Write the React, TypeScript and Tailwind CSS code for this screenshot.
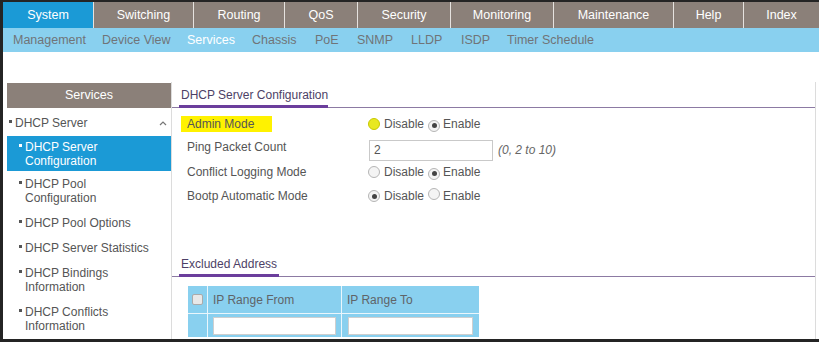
import React from 'react';

const tabs = [
  { label: 'System', w: 90, active: true },
  { label: 'Switching', w: 100 },
  { label: 'Routing', w: 91 },
  { label: 'QoS', w: 73 },
  { label: 'Security', w: 93 },
  { label: 'Monitoring', w: 103 },
  { label: 'Maintenance', w: 120 },
  { label: 'Help', w: 70 },
  { label: 'Index', w: 76 },
];

const subTabs = [
  { label: 'Management', x: 10 },
  { label: 'Device View', x: 99 },
  { label: 'Services', x: 184, active: true },
  { label: 'Chassis', x: 249 },
  { label: 'PoE', x: 312 },
  { label: 'SNMP', x: 354 },
  { label: 'LLDP', x: 408 },
  { label: 'ISDP', x: 458 },
  { label: 'Timer Schedule', x: 504 },
];

const menu = [
  { lines: ['DHCP Server', 'Configuration'], active: true },
  { lines: ['DHCP Pool', 'Configuration'] },
  { lines: ['DHCP Pool Options'] },
  { lines: ['DHCP Server Statistics'] },
  { lines: ['DHCP Bindings', 'Information'] },
  { lines: ['DHCP Conflicts', 'Information'] },
];

const Bullet = () => <span className="inline-block w-[3px] h-[3px] bg-current align-middle mr-[3px] -mt-[4px]" />;

const Radio = ({ checked, highlight }: { checked?: boolean; highlight?: boolean }) => (
  <span
    className={`inline-flex items-center justify-center w-[12px] h-[12px] rounded-full border ${
      highlight ? 'border-[#c8c800] bg-[#e8e820]' : 'border-[#b5b5b5] bg-[#f4f4f4]'
    }`}
  >
    {checked && <span className="w-[5px] h-[5px] rounded-full bg-[#444]" />}
  </span>
);

const RadioPair = ({ enabled, highlight }: { enabled: boolean; highlight?: boolean }) => (
  <div className="flex items-center text-[#555]">
    <Radio checked={!enabled} highlight={highlight} />
    <span className="ml-[4px]">Disable</span>
    <span className="ml-[4px]">
      <Radio checked={enabled} />
    </span>
    <span className="ml-[3px]">Enable</span>
  </div>
);

const SectionTitle = ({ text, barW }: { text: string; barW: number }) => (
  <div className="relative">
    <div className="pl-[9px] h-[18px] leading-[18px] text-[#4d3f66]">{text}</div>
    <div className="h-[1px] bg-[#8c7aa3] mt-[3px]" />
    <div className="absolute left-[7px] bottom-0 h-[3px] bg-[#6b3e9c]" style={{ width: barW }} />
  </div>
);

export default function App() {
  return (
    <div className="w-[819px] h-[343px] bg-white overflow-hidden" style={{ fontFamily: '"Liberation Sans", Arial, sans-serif' }}>
      <div className="h-[342px] border-t-2 border-l-[3px] border-b-[3px] border-[#242424] flex flex-col overflow-hidden text-[12px]">
        {/* main tabs */}
        <div className="flex h-[26px] bg-[#8b8079] shrink-0">
          {tabs.map((t, i) => (
            <div
              key={t.label}
              className={`flex items-center justify-center text-white text-[12.5px] ${
                t.active ? 'bg-[#1b9ad6]' : ''
              } ${i > 0 ? 'border-l border-[#e6e2df]' : ''}`}
              style={{ width: t.w }}
            >
              {t.label}
            </div>
          ))}
        </div>
        {/* sub tabs */}
        <div className="relative h-[24px] bg-[#89d0ef] shrink-0 text-[12.5px]">
          {subTabs.map((s) => (
            <span
              key={s.label}
              className={`absolute top-0 leading-[24px] ${s.active ? 'text-white' : 'text-[#707478]'}`}
              style={{ left: s.x }}
            >
              {s.label}
            </span>
          ))}
        </div>
        {/* body */}
        <div className="flex flex-1 pt-[30px] min-h-0">
          <div className="w-[168px] pl-[4px] pt-[1px] shrink-0">
            <div className="h-[25px] bg-[#8b8079] text-white flex items-center justify-center text-[12.5px]">Services</div>
            <div className="flex items-center justify-between h-[28px] pl-[2px] pr-[4px] pt-[2px] text-[#555]">
              <span>
                <Bullet />DHCP Server
              </span>
              <svg width="8" height="6" viewBox="0 0 8 6">
                <path d="M1 5 L4 2 L7 5" stroke="#777" strokeWidth="1.2" fill="none" />
              </svg>
            </div>
            {menu.map((m, i) => (
              <div
                key={i}
                className={`pl-[12px] leading-[14px] ${
                  m.active ? 'bg-[#1b9ad6] text-white py-[4px] h-[35px]' : 'text-[#555] py-[6px]'
                } ${!m.active && m.lines.length === 1 ? 'h-[25px]' : ''} ${
                  !m.active && m.lines.length === 2 ? 'h-[39px]' : ''
                }`}
              >
                {m.lines.map((l, j) => (
                  <div key={j}>
                    {j === 0 && <Bullet />}
                    {j > 0 && <span className="inline-block w-[6px]" />}
                    {l}
                  </div>
                ))}
              </div>
            ))}
          </div>
          <div className="flex-1 border-l border-r border-[#dcdcdc] pt-[4px] min-w-0">
            <SectionTitle text="DHCP Server Configuration" barW={149} />
            <div className="pt-[4px] pl-[9px] text-[#555]">
              <div className="flex items-center h-[24px]">
                <div className="w-[187px]">
                  <span className="bg-[#fff200] pl-[6px] pr-[18px] py-[1px]">Admin Mode</span>
                </div>
                <RadioPair enabled highlight />
              </div>
              <div className="flex items-center h-[24px]">
                <div className="w-[188px] pl-[6px] -mt-[2px]">Ping Packet Count</div>
                <div className="w-[124px] h-[21px] border border-[#c9c9c9] pl-[4px] flex items-center mt-[4px]">2</div>
                <span className="ml-[5px] italic text-[#666] mt-[4px]">(0, 2 to 10)</span>
              </div>
              <div className="flex items-center h-[24px]">
                <div className="w-[187px] pl-[6px]">Conflict Logging Mode</div>
                <RadioPair enabled />
              </div>
              <div className="flex items-center h-[24px]">
                <div className="w-[187px] pl-[6px]">Bootp Automatic Mode</div>
                <RadioPair enabled={false} />
              </div>
            </div>
            <div className="mt-[47px]">
              <SectionTitle text="Excluded Address" barW={100} />
            </div>
            <div className="ml-[16px] mt-[9px] w-[291px] bg-[#89d0ef] text-[#5f6468]">
              <div className="flex h-[27px]">
                <div className="w-[20px] flex items-center justify-center border-r border-[#eaf6fc]">
                  <span className="w-[11px] h-[11px] border border-[#aaa] bg-[#e8e8e8] rounded-[2px]" />
                </div>
                <div className="w-[134px] flex items-center pl-[5px] border-r border-[#eaf6fc]">IP Range From</div>
                <div className="flex-1 flex items-center pl-[5px]">IP Range To</div>
              </div>
              <div className="flex h-[24px] border-t border-[#eaf6fc]">
                <div className="w-[20px] border-r border-[#eaf6fc]" />
                <div className="w-[134px] flex items-center px-[5px] border-r border-[#eaf6fc]">
                  <div className="w-full h-[18px] bg-white border border-[#cfcfcf]" />
                </div>
                <div className="flex-1 flex items-center px-[6px]">
                  <div className="w-full h-[18px] bg-white border border-[#cfcfcf]" />
                </div>
              </div>
            </div>
          </div>
          <div className="w-[3px] shrink-0" />
        </div>
      </div>
    </div>
  );
}
